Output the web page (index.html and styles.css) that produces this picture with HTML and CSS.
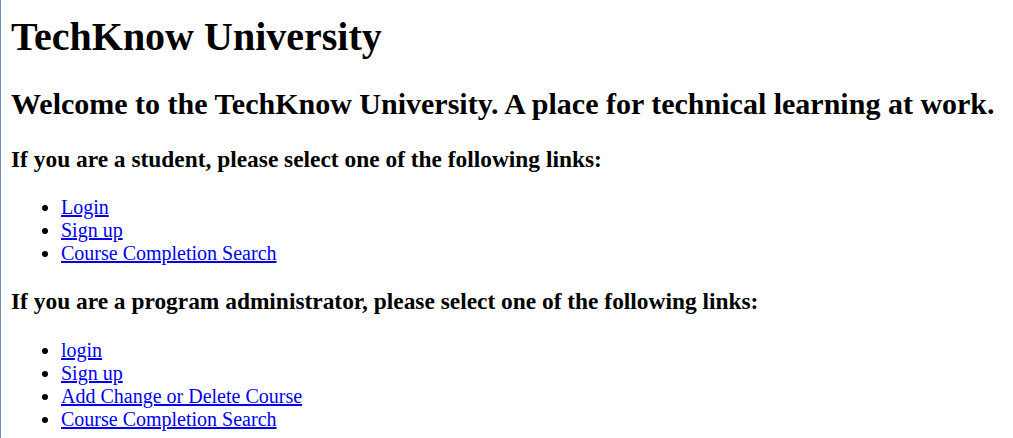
FILE: index.html
```html
<!DOCTYPE html>
<html class="root">
<head>
<meta charset="utf-8">
<title>TechKnow University</title>
<link rel="stylesheet" href="styles.css">
</head>
<body class="page">
<h1 class="title">TechKnow University</h1>
<h2 class="welcome">Welcome to the TechKnow University. A place for technical learning at work.</h2>
<h3 class="section">If you are a student, please select one of the following links:</h3>
<ul class="links">
<li><a href="#">Login</a></li>
<li><a href="#">Sign up</a></li>
<li><a href="#">Course Completion Search</a></li>
</ul>
<h3 class="section">If you are a program administrator, please select one of the following links:</h3>
<ul class="links">
<li><a href="#">login</a></li>
<li><a href="#">Sign up</a></li>
<li><a href="#">Add Change or Delete Course</a></li>
<li><a href="#">Course Completion Search</a></li>
</ul>
</body>
</html>
```
FILE: styles.css
```css
.root {
  font-size: 20px;
  min-height: 100%;
  border-left: 1px solid #6f8db5;
  box-sizing: border-box;
}
.page {
  margin: 13px 10px 10px;
  font-family: "Liberation Serif", "Times New Roman", serif;
  color: #000;
  background: #fff;
}
.title {
  margin-top: 0;
}
.links {
  padding-left: 50px;
}
.links a {
  color: #0000ee;
}
```
